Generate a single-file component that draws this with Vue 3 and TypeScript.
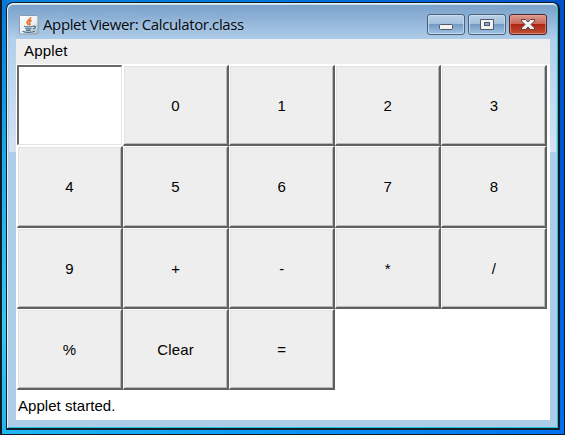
<script setup lang="ts">
import { ref } from 'vue'

const keys: string[] = ['0', '1', '2', '3', '4', '5', '6', '7', '8', '9', '+', '-', '*', '/', '%', 'Clear', '=']
const display = ref('')
let left = 0
let operator = ''

function calculate(a: number, b: number): number {
  switch (operator) {
    case '+': return a + b
    case '-': return a - b
    case '*': return a * b
    case '/': return a / b
    case '%': return a % b
    default: return b
  }
}

function press(key: string): void {
  if (/^\d$/.test(key)) {
    display.value += key
  } else if (key === 'Clear') {
    display.value = ''
    operator = ''
  } else if (key === '=') {
    display.value = String(calculate(left, Number(display.value)))
    operator = ''
  } else {
    left = Number(display.value)
    operator = key
    display.value = ''
  }
}
</script>

<template>
  <div class="desktop">
    <main class="window">
      <header class="titlebar">
        <svg class="java" width="20" height="20" viewBox="0 0 20 20">
          <defs>
            <linearGradient id="tile" x1="0" y1="0" x2="1" y2="1">
              <stop offset="0" stop-color="#fff" />
              <stop offset=".6" stop-color="#eceef0" />
              <stop offset="1" stop-color="#aab4bf" />
            </linearGradient>
          </defs>
          <rect x=".5" y=".5" width="18.5" height="18.5" rx="1" fill="url(#tile)" stroke="#8c9db0" />
          <path d="M11.600 2.300c.5 2-3.600 2.900-3.500 5 .1 1.200 1.300 1.700 1.400 3M12.600 5.400c-2.200.8-2.900 1.800-1.900 2.800.6.800.2 1.500-.4 2.100" fill="none" stroke="#e8712b" stroke-width="1.700" />
          <path d="M5 11.200c1.500.9 7 .9 8.800 0M6.200 13.200c1.700.7 4.600.7 6.300 0M6.900 15c1.300.5 3.600.5 4.900 0M3.600 16.300c2.800 1.500 9.600 1.500 12.300-.2M14 11.300c3.600-.9 3 2-.3 2.700" fill="none" stroke="#47718f" stroke-width="1.200" />
        </svg>
        <h1 class="title">Applet Viewer: Calculator.class</h1>
        <div class="controls">
          <button class="control" aria-label="Minimize">
            <svg width="38" height="21" viewBox="0 0 38 21"><rect x="12.500" y="10.500" width="13" height="5" rx="1" fill="#f3f3f3" stroke="#535666" /></svg>
          </button>
          <button class="control" aria-label="Maximize">
            <svg width="38" height="21" viewBox="0 0 38 21"><path d="M12.500 5.500h13v10h-13z" fill="#f3f3f3" stroke="#535666" stroke-linejoin="round" /><rect x="16.500" y="8.500" width="5" height="3" fill="#82a9cf" stroke="#535666" /></svg>
          </button>
          <button class="control close" aria-label="Close">
            <svg width="38" height="21" viewBox="0 0 38 21"><path d="M12.500 5.500h4l2.500 2.500 2.500-2.500h4v1.500l-3.500 3.500 3.500 3.500v1.500h-4L19 13l-2.500 2.500h-4V14l3.500-3.500L12.500 7z" fill="#f3f3f3" stroke="#5c3f48" stroke-linejoin="round" /></svg>
          </button>
        </div>
      </header>
      <section class="content">
        <nav class="menubar">Applet</nav>
        <div class="grid">
          <input v-model="display" class="display" type="text" aria-label="Result" />
          <button v-for="key in keys" :key="key" class="key" @click="press(key)">{{ key }}</button>
        </div>
        <footer class="status">Applet started.</footer>
      </section>
    </main>
  </div>
</template>

<style>
body {
  margin: 0;
  overflow: hidden;
}
</style>

<style scoped>
* {
  box-sizing: border-box;
}

.desktop {
  width: 565px;
  height: 435px;
  padding: 2px 4px 4px 4px;
  border: solid #141a22;
  border-width: 0 1px 1px 2px;
  background:
    linear-gradient(90deg, #20b6f2, #0c9cf6 40%, #0070ef) bottom / 100% 5px no-repeat,
    linear-gradient(#0878d8, #18aaf0 35%, #34c8f2 75%, #20b6f2) left / 5px 100% no-repeat,
    linear-gradient(#0052c8, #0057d8 45%, #006eed) right / 5px 100% no-repeat,
    linear-gradient(90deg, #0a82dc, #0075dc 50%, #0050cc);
}

.window {
  height: 428px;
  padding: 0 8px 8px 9px;
  border: solid #101c28;
  border-width: 1px 2px 2px 1px;
  border-radius: 7px 7px 1px 1px;
  background:
    linear-gradient(#abcae700, #d5e2f3) left 2px top 20px / 7px 129px no-repeat,
    linear-gradient(#abcae700, #d5e2f3) right 2px top 20px / 6px 129px no-repeat,
    linear-gradient(#779fc9, #adcce8 36px, #adcce8);
  box-shadow: inset 1px 1px #e1f2fa, inset -1px -1px #20c5d9, inset 0 2px #ccddec;
}

.titlebar {
  display: flex;
  height: 36px;
  padding: 0 2px 0 3px;
  align-items: flex-start;
}

.java {
  flex: none;
  margin-top: 12px;
}

.title {
  flex: 1;
  margin: 9px 0 0 4px;
  font: 400 15px/24px "Open Sans", "Noto Sans", sans-serif;
  letter-spacing: -0.38px;
  color: #05090e;
  white-space: nowrap;
  text-shadow: 0 0 5px #dceaf580;
}

.controls {
  display: flex;
  gap: 3px;
  margin: 11px 1px 0 0;
}

.control {
  display: block;
  width: 38px;
  height: 21px;
  padding: 0;
  border: 1px solid #4a607c;
  border-radius: 3px;
  background: linear-gradient(#bbd1e7, #a3c1df 45%, #7399c4 48%, #9fc4e3);
  box-shadow: inset 0 0 0 1px #d4e4f2b0;
}

.control svg {
  display: block;
  margin: -1px;
}

.close {
  border-color: #50262f;
  background: linear-gradient(#dc9b8c, #cb695a 45%, #ad2410 48%, #c04f34);
  box-shadow: inset 0 0 0 1px #eaa99b99;
}

.content {
  height: 381px;
  background: #fff;
  font: 15px/18px "Liberation Sans", Arial, sans-serif;
  color: #000;
}

.menubar {
  height: 25px;
  padding: 3px 8px 0;
  background: #eee;
  letter-spacing: 0.2px;
}

.grid {
  display: grid;
  grid-template-columns: repeat(5, 106.100px);
  grid-template-rows: repeat(4, 81.250px);
  margin: 1px 0 0 1px;
}

.key {
  padding: 2px 0 0;
  border: solid;
  border-width: 1px 2px 2px 1px;
  border-color: #fff #606060 #606060 #fff;
  background: #eee;
  box-shadow: inset 1px 1px #e2e2e2, inset -1px -1px #b8b8b8;
  font: inherit;
  letter-spacing: 0.2px;
  color: inherit;
}

.display {
  width: 105px;
  height: 80px;
  padding: 4px;
  border: solid;
  border-width: 2px 1px 1px 2px;
  border-color: #696969 #e3e3e3 #e3e3e3 #696969;
  border-radius: 0;
  background: #fff;
  font: inherit;
  outline: none;
}

.status {
  padding: 7px 2px 0;
  letter-spacing: 0.05px;
}
</style>
